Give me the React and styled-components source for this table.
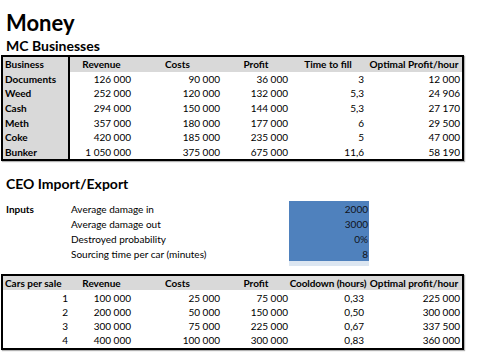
import React from "react";
import styled, { createGlobalStyle } from "styled-components";

const GlobalStyle = createGlobalStyle`
  html, body {
    margin: 0;
    padding: 0;
    background: #ffffff;
  }
  body {
    font-family: Lato, "Liberation Sans", sans-serif;
    color: #000000;
  }
`;

const COLS = "67px 63px 89px 68px 76px 96px";

const mcRows = [
  ["Documents", "126 000", "90 000", "36 000", "3", "12 000"],
  ["Weed", "252 000", "120 000", "132 000", "5,3", "24 906"],
  ["Cash", "294 000", "150 000", "144 000", "5,3", "27 170"],
  ["Meth", "357 000", "180 000", "177 000", "6", "29 500"],
  ["Coke", "420 000", "185 000", "235 000", "5", "47 000"],
  ["Bunker", "1 050 000", "375 000", "675 000", "11,6", "58 190"],
];

const carRows = [
  ["1", "100 000", "25 000", "75 000", "0,33", "225 000"],
  ["2", "200 000", "50 000", "150 000", "0,50", "300 000"],
  ["3", "300 000", "75 000", "225 000", "0,67", "337 500"],
  ["4", "400 000", "100 000", "300 000", "0,83", "360 000"],
];

const inputs = [
  ["Average damage in", "2000"],
  ["Average damage out", "3000"],
  ["Destroyed probability", "0%"],
  ["Sourcing time per car (minutes)", "8"],
];

// excel uses a non breaking space as thousands separator
const nb = (s) => s.replace(/ /g, "\u00a0");

function App() {
  return (
    <>
      <GlobalStyle />
      <Sheet>
        <Title>Money</Title>
        <Heading $top={2}>MC Businesses</Heading>
        <Table $row={14.6}>
          <Cell $align="left" $bold $shade $divider>Business</Cell>
          <Cell $align="center" $bold $shade>Revenue</Cell>
          <Cell $align="center" $bold $shade>Costs</Cell>
          <Cell $align="center" $bold $shade>Profit</Cell>
          <Cell $align="center" $bold $shade>Time to fill</Cell>
          <Cell $align="center" $bold $shade>Optimal Profit/hour</Cell>
          {mcRows.map((row) =>
            row.map((v, i) =>
              i === 0 ? (
                <Cell key={row[0] + i} $align="left" $bold $shade $divider>{v}</Cell>
              ) : (
                <Cell key={row[0] + i}>{nb(v)}</Cell>
              )
            )
          )}
        </Table>

        <Heading $top={14}>CEO Import/Export</Heading>
        <InputsBlock>
          <InputsTitle>Inputs</InputsTitle>
          <ParamList>
            {inputs.map(([label, value]) => (
              <React.Fragment key={label}>
                <Param>{label}</Param>
                <Value>{value}</Value>
              </React.Fragment>
            ))}
            <Param />
            <Value $light />
          </ParamList>
        </InputsBlock>

        <Table $row={14.3} $top={8}>
          <Cell $align="left" $bold $shade>Cars per sale</Cell>
          <Cell $align="center" $bold $shade>Revenue</Cell>
          <Cell $align="center" $bold $shade>Costs</Cell>
          <Cell $align="center" $bold $shade>Profit</Cell>
          <Cell $align="center" $bold $shade $spill>Cooldown (hours)</Cell>
          <Cell $align="center" $bold $shade>Optimal profit/hour</Cell>
          {carRows.map((row) =>
            row.map((v, i) => <Cell key={row[0] + "-" + i}>{nb(v)}</Cell>)
          )}
        </Table>
      </Sheet>
    </>
  );
}

const Sheet = styled.div`
  width: 480px;
  height: 353px;
  overflow: hidden;
  padding-top: 10px;
  box-sizing: border-box;
`;

const Title = styled.h1`
  margin: 0 0 0 6px;
  font-size: 22px;
  line-height: 25px;
  font-weight: 700;
`;

const Heading = styled.h2`
  margin: ${(p) => p.$top}px 0 0 6px;
  font-size: 14px;
  line-height: 18px;
  font-weight: 700;
`;

const Table = styled.div`
  display: grid;
  grid-template-columns: ${COLS};
  grid-auto-rows: ${(p) => p.$row}px;
  width: max-content;
  margin: ${(p) => p.$top || 0}px 0 0 1px;
  border: 2px solid #000;
  box-shadow: 1px 1px 1px rgba(0, 0, 0, 0.3);
  font-size: 10px;
`;

const Cell = styled.div`
  display: flex;
  align-items: center;
  justify-content: ${(p) =>
    p.$align === "left" ? "flex-start" : p.$align === "center" ? "center" : "flex-end"};
  padding: 0 ${(p) => (p.$spill ? 0 : 2)}px;
  box-sizing: border-box;
  font-weight: ${(p) => (p.$bold ? 700 : 400)};
  background: ${(p) => (p.$shade ? "#d9d9d9" : "#ffffff")};
  border-right: ${(p) => (p.$divider ? "2px solid #000" : "none")};
  white-space: nowrap;
  ${(p) => p.$spill && "position: relative; z-index: 1; letter-spacing: -0.1px;"}
`;

const InputsBlock = styled.div`
  display: flex;
  margin-top: 8px;
  font-size: 10px;
`;

const InputsTitle = styled.div`
  width: 70px;
  height: 15px;
  padding-left: 6px;
  box-sizing: border-box;
  font-weight: 700;
  display: flex;
  align-items: center;
`;

const ParamList = styled.div`
  display: grid;
  grid-template-columns: 219px 80px;
  grid-template-rows: repeat(4, 15px) 5px;
`;

const Param = styled.div`
  display: flex;
  align-items: center;
  padding-left: 1px;
  white-space: nowrap;
`;

const Value = styled.div`
  display: flex;
  align-items: center;
  justify-content: flex-end;
  padding-right: 1px;
  background: ${(p) => (p.$light ? "#dce6f1" : "#4f81bd")};
  color: #10131a;
`;

export default App;
